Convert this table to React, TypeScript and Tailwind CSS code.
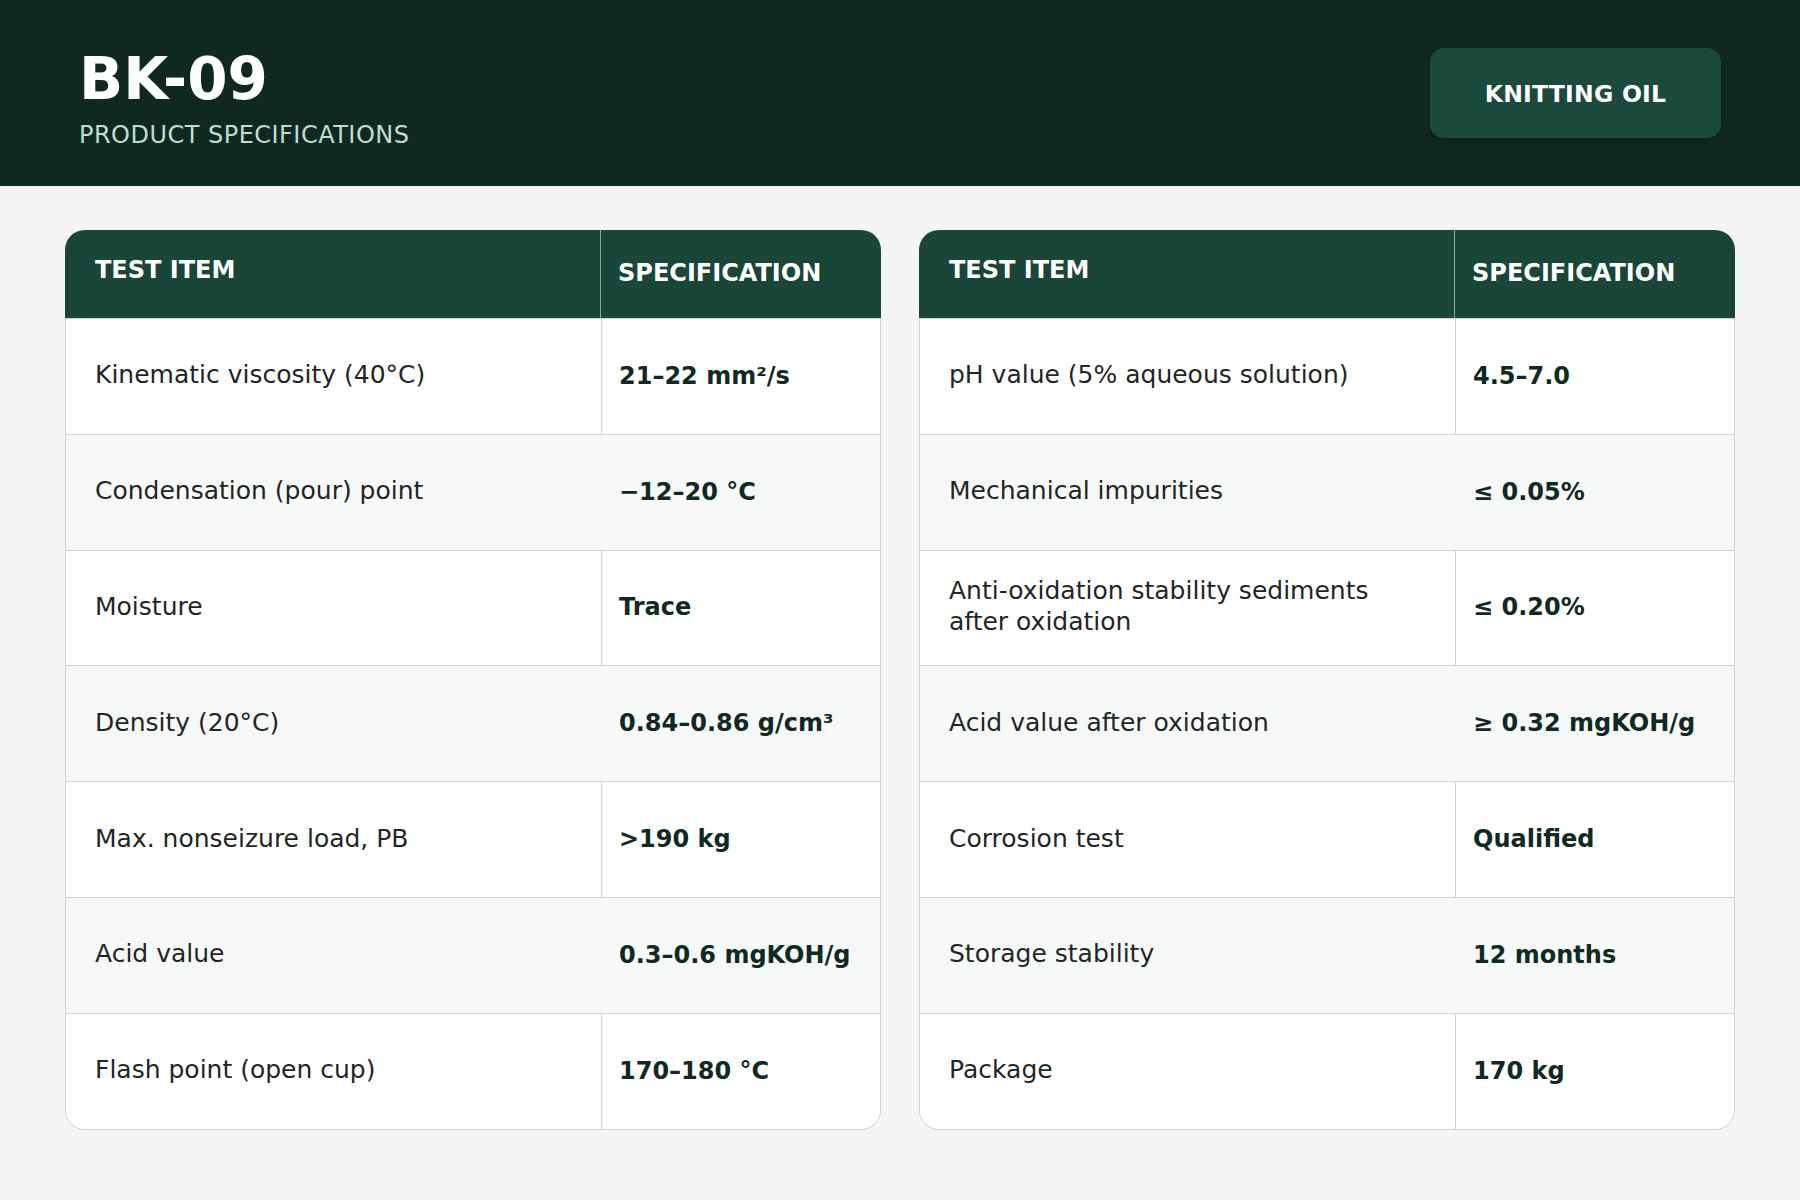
const LEFT = [
  { item: 'Kinematic viscosity (40°C)', spec: '21–22 mm²/s' },
  { item: 'Condensation (pour) point', spec: '−12–20 °C' },
  { item: 'Moisture', spec: 'Trace' },
  { item: 'Density (20°C)', spec: '0.84–0.86 g/cm³' },
  { item: 'Max. nonseizure load, PB', spec: '>190 kg' },
  { item: 'Acid value', spec: '0.3–0.6 mgKOH/g' },
  { item: 'Flash point (open cup)', spec: '170–180 °C' },
];

const RIGHT = [
  { item: 'pH value (5% aqueous solution)', spec: '4.5–7.0' },
  { item: 'Mechanical impurities', spec: '≤ 0.05%' },
  { item: 'Anti-oxidation stability sediments after oxidation', spec: '≤ 0.20%' },
  { item: 'Acid value after oxidation', spec: '≥ 0.32 mgKOH/g' },
  { item: 'Corrosion test', spec: 'Qualified' },
  { item: 'Storage stability', spec: '12 months' },
  { item: 'Package', spec: '170 kg' },
];

function SpecTable({ rows }: { rows: { item: string; spec: string }[] }) {
  return (
    <div className="flex flex-col">
      {/* header */}
      <div className="flex h-[88px] rounded-t-[20px] bg-[#1a4539] text-white font-bold text-[24px] leading-[30px]">
        <div className="w-[536px] border-r border-[#8fa39d] pl-[30px] pt-[25px]">TEST ITEM</div>
        <div className="flex-1 pl-[17px] pt-[28px]">SPECIFICATION</div>
      </div>
      {/* body */}
      <div className="rounded-b-[20px] border-x border-b border-[#cdd4d4] bg-white overflow-hidden">
        {rows.map((r, i) => {
          const even = i % 2 === 1;
          return (
            <div key={r.item}
              className={`flex h-[115.8px] border-t border-[#cdd4d4] ${even ? 'bg-[#f7f9f9]' : 'bg-white'}`}>
              <div className="w-[535px] flex items-center pl-[29px] pr-[60px] pb-[3px] text-[25px] leading-[31px] text-[#1f2626]">
                {r.item}
              </div>
              <div className={`flex-1 flex items-center pl-[17px] pb-[1px] text-[24px] leading-[30px] font-bold text-[#0f2a22] ${even ? 'border-l border-transparent' : 'border-l border-[#cdd4d4]'}`}>
                {r.spec}
              </div>
            </div>
          );
        })}
      </div>
    </div>
  );
}

export default function App() {
  return (
    <div className="min-h-[1200px] bg-[#f5f5f5] font-['DejaVu_Sans',sans-serif]">
      <header className="flex justify-between h-[186px] bg-[#0f2922] pl-[79px] pr-[79px]">
        <div className="pt-[50px]">
          <h1 className="text-[58px] leading-[58px] font-bold text-white">BK-09</h1>
          <p className="mt-[13px] text-[24px] leading-[28px] tracking-[0.02em] text-[#c0ddd0]">PRODUCT SPECIFICATIONS</p>
        </div>
        <div className="mt-[48px] flex h-[90px] w-[291px] items-center justify-center pt-[4px] rounded-[14px] bg-[#1b4a3d] shadow-[0_2px_6px_rgba(0,0,0,0.25)] text-[23.5px] font-bold text-white tracking-[0.01em]">
          KNITTING OIL
        </div>
      </header>

      <main className="grid grid-cols-2 gap-[38px] px-[65px] pt-[44px]">
        <SpecTable rows={LEFT} />
        <SpecTable rows={RIGHT} />
      </main>
    </div>
  );
}
